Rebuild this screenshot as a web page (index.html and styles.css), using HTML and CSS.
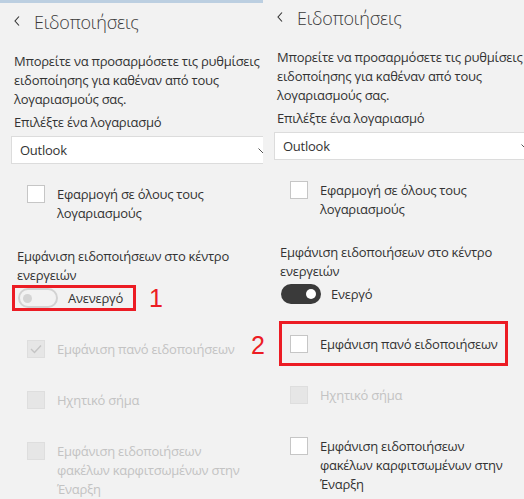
FILE: index.html
```html
<!DOCTYPE html>
<html lang="el">
<head>
  <meta charset="UTF-8" />
  <meta name="viewport" content="width=device-width, initial-scale=1.0" />
  <title>Ειδοποιήσεις</title>
  <link rel="stylesheet" href="styles.css">
</head>
<body>

  <div class="page">

    <section class="panel panel-left">
      <div class="accent"></div>
      <div class="head">
        <svg class="back" width="6" height="10" viewBox="0 0 6 10"><polyline points="5,0.5 1,5 5,9.5" fill="none" stroke="#333" stroke-width="1.1"/></svg>
        <h1>Ειδοποιήσεις</h1>
      </div>
      <p class="intro">Μπορείτε να προσαρμόσετε τις ρυθμίσεις<br>ειδοποίησης για καθέναν από τους<br>λογαριασμούς σας.</p>
      <div class="field-label">Επιλέξτε ένα λογαριασμό</div>
      <div class="select">Outlook
        <svg class="chevron" width="10" height="6" viewBox="0 0 10 6"><polyline points="0.5,0.5 5,5 9.5,0.5" fill="none" stroke="#555" stroke-width="1"/></svg>
      </div>

      <div class="check-row first">
        <span class="box"></span>
        <span class="text">Εφαρμογή σε όλους τους<br>λογαριασμούς</span>
      </div>

      <p class="section">Εμφάνιση ειδοποιήσεων στο κέντρο<br>ενεργειών</p>
      <div class="toggle-line">
        <div class="toggle-wrap marked">
          <span class="toggle off"></span>
          <span class="toggle-text">Ανενεργό</span>
        </div>
        <span class="num">1</span>
      </div>

      <div class="check-row disabled">
        <span class="box">
          <svg width="12" height="10" viewBox="0 0 12 10"><polyline points="1,5 4.5,8.5 11,1.5" fill="none" stroke="#c4c4c4" stroke-width="1.4"/></svg>
        </span>
        <span class="text">Εμφάνιση πανό ειδοποιήσεων</span>
      </div>
      <div class="check-row disabled">
        <span class="box"></span>
        <span class="text">Ηχητικό σήμα</span>
      </div>
      <div class="check-row disabled">
        <span class="box"></span>
        <span class="text">Εμφάνιση ειδοποιήσεων<br>φακέλων καρφιτσωμένων στην<br>Έναρξη</span>
      </div>
    </section>

    <section class="panel panel-right">
      <div class="head">
        <svg class="back" width="6" height="10" viewBox="0 0 6 10"><polyline points="5,0.5 1,5 5,9.5" fill="none" stroke="#333" stroke-width="1.1"/></svg>
        <h1>Ειδοποιήσεις</h1>
      </div>
      <p class="intro">Μπορείτε να προσαρμόσετε τις ρυθμίσεις<br>ειδοποίησης για καθέναν από τους<br>λογαριασμούς σας.</p>
      <div class="field-label">Επιλέξτε ένα λογαριασμό</div>
      <div class="select">Outlook
        <svg class="chevron" width="10" height="6" viewBox="0 0 10 6"><polyline points="0.5,0.5 5,5 9.5,0.5" fill="none" stroke="#555" stroke-width="1"/></svg>
      </div>

      <div class="check-row first">
        <span class="box"></span>
        <span class="text">Εφαρμογή σε όλους τους<br>λογαριασμούς</span>
      </div>

      <p class="section">Εμφάνιση ειδοποιήσεων στο κέντρο<br>ενεργειών</p>
      <div class="toggle-line">
        <div class="toggle-wrap">
          <span class="toggle on"></span>
          <span class="toggle-text">Ενεργό</span>
        </div>
      </div>

      <div class="check-row marked">
        <span class="box"></span>
        <span class="text">Εμφάνιση πανό ειδοποιήσεων</span>
      </div>
      <div class="check-row disabled">
        <span class="box"></span>
        <span class="text">Ηχητικό σήμα</span>
      </div>
      <div class="check-row">
        <span class="box"></span>
        <span class="text">Εμφάνιση ειδοποιήσεων<br>φακέλων καρφιτσωμένων στην<br>Έναρξη</span>
      </div>
    </section>

    <span class="num num-2">2</span>
  </div>

</body>
</html>
```

FILE: styles.css
```css
body {
  margin: 0;
  font-family: 'Open Sans', 'Noto Sans', sans-serif;
  font-size: 13px;
  letter-spacing: -0.25px;
  color: #333;
  background-color: #f2f2f2;
}

.page {
  display: flex;
  position: relative;
  height: 499px;
  overflow: hidden;
}

.panel {
  flex: none;
  overflow: hidden;
  white-space: nowrap;
}

.panel-left {
  width: 263px;
  padding-top: 5px;
}

.panel-left .accent {
  height: 3px;
  margin-top: -5px;
  margin-bottom: 5px;
  background-color: #bccfe1;
}

.panel-right {
  width: 261px;
}

.head {
  display: flex;
  align-items: center;
  height: 28px;
  margin-top: 4px;
  padding-left: 14px;
}

.back {
  margin-right: 14px;
  margin-top: -3px;
}

.head h1 {
  margin: 0;
  font-size: 18px;
  font-weight: 300;
  letter-spacing: -0.2px;
  line-height: 28px;
  color: #3a3a3a;
}

.intro {
  margin: 16px 0 0 14px;
  line-height: 19px;
}

.field-label {
  margin: 4px 0 0 14px;
  line-height: 19px;
}

.select {
  position: relative;
  box-sizing: border-box;
  width: 264px;
  height: 28px;
  margin: 4px 0 0 11px;
  padding: 0 8px;
  line-height: 26px;
  background-color: #fff;
  border: 1px solid #dcdcdc;
}

.select .chevron {
  position: absolute;
  right: 6px;
  top: 11px;
}

.check-row {
  display: flex;
  align-items: flex-start;
  margin: 32px 0 0 27px;
  line-height: 19px;
}

.check-row.first {
  margin-top: 21px;
}

.box {
  flex: none;
  box-sizing: border-box;
  width: 18px;
  height: 18px;
  margin-right: 12px;
  background-color: #fff;
  border: 1px solid #c6c6c6;
  display: flex;
  align-items: center;
  justify-content: center;
}

.check-row.disabled .box {
  background-color: #e6e6e6;
  border-color: #dedede;
}

.check-row.disabled .text {
  color: #c3c3c3;
}

.check-row.marked {
  box-sizing: border-box;
  width: 229px;
  margin: 17px 0 -12px 16px;
  padding: 11px 8px 9px;
  border: 3px solid #ec1c24;
}

.section {
  margin: 24px 0 0 17px;
  line-height: 19px;
}

.toggle-line {
  display: flex;
  align-items: center;
  margin-top: 3px;
}

.toggle-wrap {
  display: flex;
  align-items: center;
  margin-left: 18px;
}

.toggle-wrap.marked {
  margin: -3px 0 -3px 12px;
  padding: 0 10px 0 3px;
  border: 3px solid #ec1c24;
}

.toggle {
  position: relative;
  box-sizing: border-box;
  width: 40px;
  height: 20px;
  margin-right: 10px;
  border-radius: 10px;
}

.toggle::after {
  content: "";
  position: absolute;
  top: 50%;
  border-radius: 50%;
}

.toggle.off {
  border: 2px solid #d2d2d2;
}

.toggle.off::after {
  left: 3px;
  width: 9px;
  height: 9px;
  margin-top: -4.5px;
  background-color: #d4d4d4;
}

.toggle.on {
  background-color: #3a3a3a;
}

.toggle.on::after {
  right: 5px;
  width: 10px;
  height: 10px;
  margin-top: -5px;
  background-color: #fff;
}

.toggle-text {
  line-height: 20px;
}

.num {
  margin-left: 13px;
  font-family: 'Liberation Sans', sans-serif;
  font-size: 25px;
  letter-spacing: 0;
  line-height: 20px;
  color: #ec1c24;
}

.num-2 {
  position: absolute;
  left: 251px;
  top: 335px;
  margin: 0;
}
```
